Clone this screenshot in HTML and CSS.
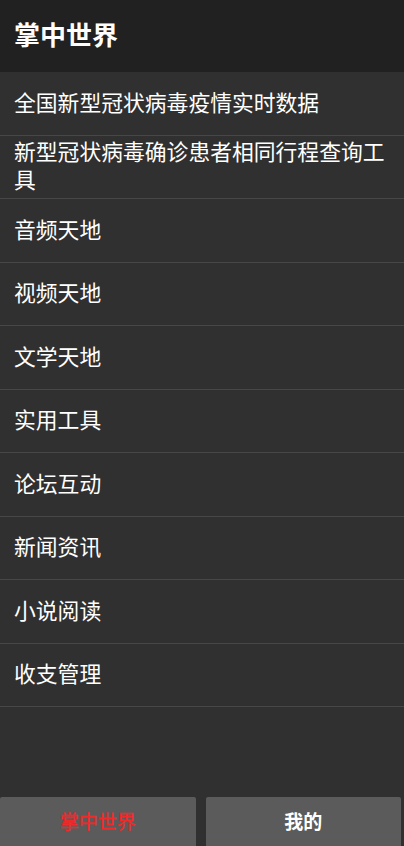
FILE: index.html
```html
<!DOCTYPE html>
<html lang="zh-CN">
<head>
<meta charset="utf-8">
<title>掌中世界</title>
<link rel="stylesheet" href="styles.css">
</head>
<body>
<div class="app">
  <header class="appbar">掌中世界</header>
  <ul class="menu">
    <li class="item">全国新型冠状病毒疫情实时数据</li>
    <li class="item">新型冠状病毒确诊患者相同行程查询工具</li>
    <li class="item">音频天地</li>
    <li class="item">视频天地</li>
    <li class="item">文学天地</li>
    <li class="item">实用工具</li>
    <li class="item">论坛互动</li>
    <li class="item">新闻资讯</li>
    <li class="item">小说阅读</li>
    <li class="item">收支管理</li>
  </ul>
  <nav class="tabs">
    <div class="tab active">掌中世界</div>
    <div class="tab">我的</div>
  </nav>
</div>
</body>
</html>
```

FILE: styles.css
```css
html, body {
  margin: 0;
  padding: 0;
  background: #303030;
}
body {
  font-family: "Noto Sans CJK SC", "Noto Sans", sans-serif;
  color: #ffffff;
}
.app {
  width: 404px;
  height: 846px;
  display: flex;
  flex-direction: column;
  background: #303030;
  overflow: hidden;
}
.appbar {
  height: 72px;
  flex: none;
  background: #212121;
  display: flex;
  align-items: center;
  padding: 0 14px 4px 14px;
  font-size: 26px;
  font-weight: 700;
  line-height: 1;
  box-sizing: border-box;
}
.menu {
  list-style: none;
  margin: 0;
  padding: 0;
  flex: 1;
}
.item {
  height: 63.5px;
  box-sizing: border-box;
  border-bottom: 1px solid #474747;
  display: flex;
  align-items: center;
  padding: 0 14px 3px 14px;
  font-size: 21.8px;
  line-height: 28.5px;
  color: #ffffff;
}
.tabs {
  flex: none;
  height: 49px;
  display: flex;
  gap: 10px;
  padding-right: 3px;
}
.tab {
  flex: 1;
  background: #5b5b5b;
  border-radius: 2px 2px 0 0;
  display: flex;
  align-items: center;
  justify-content: center;
  font-size: 19px;
  font-weight: 700;
  color: #ffffff;
  padding-bottom: 3px;
}
.tab.active {
  color: #ee2a2a;
  font-weight: 400;
  -webkit-text-stroke: 0.3px #ee2a2a;
}
```
